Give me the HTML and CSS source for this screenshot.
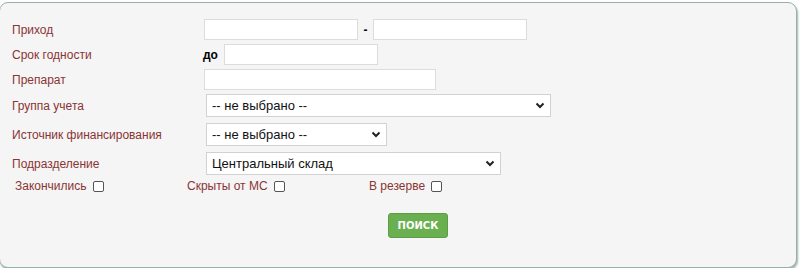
FILE: index.html
```html
<!DOCTYPE html>
<html lang="ru">
<head>
    <meta charset="UTF-8">
    <title>Поиск препаратов</title>
    <link rel="stylesheet" href="styles.css">
</head>
<body>
    <div class="panel">
        <form class="search-form">
            <div class="row row-input">
                <label class="caption">Приход</label>
                <div class="controls">
                    <input type="text" class="field w154">
                    <span class="dash">-</span>
                    <input type="text" class="field w154">
                </div>
            </div>
            <div class="row row-input">
                <label class="caption">Срок годности</label>
                <div class="controls">
                    <span class="to">до</span>
                    <input type="text" class="field w154">
                </div>
            </div>
            <div class="row row-input">
                <label class="caption">Препарат</label>
                <div class="controls">
                    <input type="text" class="field w232">
                </div>
            </div>
            <div class="row row-select first-select">
                <label class="caption">Группа учета</label>
                <div class="controls">
                    <span class="select-wrap w345">
                        <select class="select"><option>-- не выбрано --</option></select>
                        <svg class="chevron" viewBox="0 0 10 7" width="10" height="7"><path d="M1.5 1.5 L5 5 L8.5 1.5" fill="none" stroke="#222" stroke-width="2"/></svg>
                    </span>
                </div>
            </div>
            <div class="row row-select">
                <label class="caption">Источник финансирования</label>
                <div class="controls">
                    <span class="select-wrap w181">
                        <select class="select"><option>-- не выбрано --</option></select>
                        <svg class="chevron" viewBox="0 0 10 7" width="10" height="7"><path d="M1.5 1.5 L5 5 L8.5 1.5" fill="none" stroke="#222" stroke-width="2"/></svg>
                    </span>
                </div>
            </div>
            <div class="row row-select">
                <label class="caption">Подразделение</label>
                <div class="controls">
                    <span class="select-wrap w295">
                        <select class="select"><option>Центральный склад</option></select>
                        <svg class="chevron" viewBox="0 0 10 7" width="10" height="7"><path d="M1.5 1.5 L5 5 L8.5 1.5" fill="none" stroke="#222" stroke-width="2"/></svg>
                    </span>
                </div>
            </div>
            <div class="checks">
                <label class="check">Закончились <input type="checkbox"></label>
                <label class="check">Скрыты от МС <input type="checkbox"></label>
                <label class="check">В резерве <input type="checkbox"></label>
            </div>
            <div class="actions">
                <button type="button" class="btn-search">ПОИСК</button>
            </div>
        </form>
    </div>
</body>
</html>
```

FILE: styles.css
```css
body {
    margin: 0;
    font-family: Arial, "Liberation Sans", sans-serif;
    font-size: 12px;
    background: #ffffff;
}
.panel {
    margin: 2px 3px 0 -1px;
    height: 266px;
    box-sizing: border-box;
    background-color: #f5f5f5;
    border: 1px solid #98b1aa;
    border-radius: 9px;
    box-shadow: 1px 2px 2px rgba(80, 120, 110, 0.55);
}
.search-form {
    padding: 16px 0 0 12px;
}
.row {
    display: flex;
    align-items: center;
}
.caption {
    width: 192px;
    color: #8a3434;
    flex-shrink: 0;
}
.controls {
    display: flex;
    align-items: center;
}
.row-input {
    height: 21px;
    margin-bottom: 4px;
}
.field {
    height: 21px;
    box-sizing: border-box;
    border: 1px solid #dcdcdc;
    background: #fff;
    margin: 0;
    padding: 2px 4px;
}
.w154 { width: 154px; }
.w232 { width: 232px; }
.w345 { width: 345px; }
.w181 { width: 181px; }
.w295 { width: 295px; }
.dash {
    font-weight: bold;
    width: 15px;
    text-align: center;
}
.to {
    font-weight: bold;
    color: #000;
    margin-right: 6px;
    margin-left: -1px;
}
.first-select {
    margin-top: 1px;
}
.row-select {
    height: 23px;
    margin-bottom: 6px;
}
.row-select .controls {
    padding-left: 2px;
}
.select-wrap {
    position: relative;
    display: inline-block;
}
.select {
    -webkit-appearance: none;
    appearance: none;
    width: 100%;
    height: 23px;
    box-sizing: border-box;
    border: 1px solid #d2d2d2;
    border-radius: 0;
    background: #fff;
    font-family: Arial, "Liberation Sans", sans-serif;
    font-size: 13px;
    color: #111;
    padding: 0 20px 0 5px;
    margin: 0;
}
.chevron {
    position: absolute;
    right: 6px;
    top: 8px;
    pointer-events: none;
}
.checks {
    display: grid;
    grid-template-columns: 172px 182px auto;
    padding-left: 3px;
    margin-top: -2px;
}
.check {
    color: #8a3434;
    display: flex;
    align-items: center;
}
.check input {
    width: 11px;
    height: 11px;
    margin: 0 0 0 6px;
    -webkit-appearance: none;
    appearance: none;
    border: 1px solid #555;
    border-radius: 2px;
    background: #fff;
}
.actions {
    padding-left: 376px;
    margin-top: 20px;
}
.btn-search {
    width: 60px;
    height: 25px;
    background-color: #6aaf50;
    border: 1px solid #5c9e44;
    border-radius: 3px;
    color: #fff;
    font-family: Tahoma, "DejaVu Sans", sans-serif;
    font-weight: bold;
    font-size: 10px;
    padding: 0;
    cursor: pointer;
}
```
